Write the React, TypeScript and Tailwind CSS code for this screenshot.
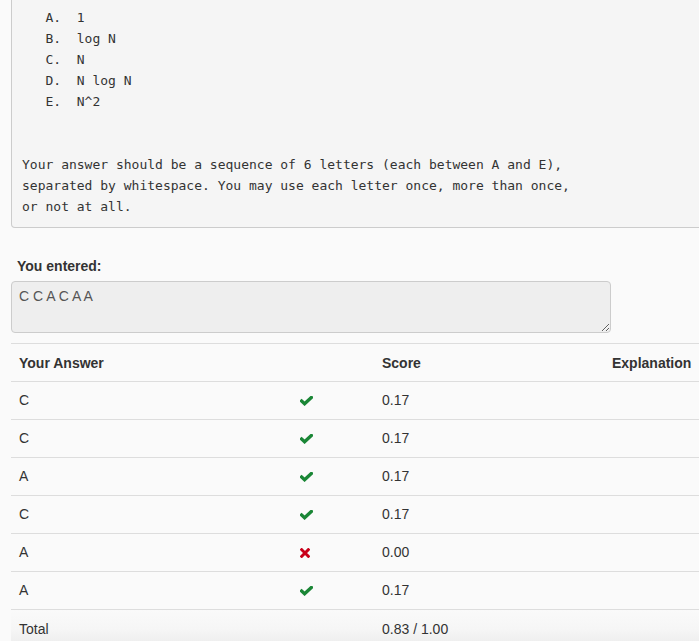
import React from "react";

const rows: { ans: string; ok: boolean; score: string }[] = [
  { ans: "C", ok: true, score: "0.17" },
  { ans: "C", ok: true, score: "0.17" },
  { ans: "A", ok: true, score: "0.17" },
  { ans: "C", ok: true, score: "0.17" },
  { ans: "A", ok: false, score: "0.00" },
  { ans: "A", ok: true, score: "0.17" },
];

function Check() {
  return (
    <svg width="13" height="10" viewBox="0 0 13 10" className="block">
      <path d="M1.6 5.0 L4.6 7.8 L11.4 1.4" fill="none" stroke="#1a8636" strokeWidth="3.3" strokeLinecap="square" />
    </svg>
  );
}

function Cross() {
  return (
    <svg width="10" height="10" viewBox="0 0 10 10" className="block">
      <path d="M1.7 1.7 L8.3 8.3 M8.3 1.7 L1.7 8.3" fill="none" stroke="#c9001a" strokeWidth="3" strokeLinecap="square" />
    </svg>
  );
}

const pre = `   A.  1
   B.  log N
   C.  N
   D.  N log N
   E.  N^2


Your answer should be a sequence of 6 letters (each between A and E),
separated by whitespace. You may use each letter once, more than once,
or not at all.`;

export default function App() {
  return (
    <div
      className="w-[699px] h-[641px] overflow-hidden bg-[#fafafa] text-[#333] text-[14px]"
      style={{ fontFamily: '"Liberation Sans", Arial, sans-serif' }}
    >
      <div className="ml-[11px] mr-[-20px]">
        <pre
          className="bg-[#f5f5f5] border border-t-0 border-[#cccccc] rounded-b-[4px] pt-[7px] pb-[10px] pl-[10px] text-[13px] leading-[21px] text-[#333] whitespace-pre"
          style={{ fontFamily: '"DejaVu Sans Mono", "Liberation Mono", monospace' }}
        >
          {pre}
        </pre>
      </div>

      <div className="mt-[28px] ml-[17px] font-bold leading-[20px]">You entered:</div>

      <div className="mt-[5px] ml-[11px] w-[600px]">
        <textarea
          readOnly
          value="C C A C A A"
          className="block w-[600px] h-[52px] bg-[#eeeeee] border border-[#cccccc] rounded-[4px] pt-[4px] pl-[7px] leading-[20px] text-[14px] text-[#555] outline-none"
          style={{ fontFamily: '"Liberation Sans", Arial, sans-serif', resize: "both" }}
        />
      </div>

      <div className="mt-[10px] ml-[11px] border-t border-[#dddddd]">
        <div className="grid grid-cols-[281px_82px_230px_1fr] h-[38px] items-center border-b border-[#dddddd] font-bold pt-[1px]">
          <div className="pl-[8px]">Your Answer</div>
          <div />
          <div className="pl-[8px]">Score</div>
          <div className="pl-[8px]">Explanation</div>
        </div>
        {rows.map((r, i) => (
          <div
            key={i}
            className="grid grid-cols-[281px_82px_230px_1fr] h-[38px] items-center border-b border-[#dddddd]"
          >
            <div className="pl-[8px]">{r.ans}</div>
            <div className="pl-[8px]">{r.ok ? <Check /> : <Cross />}</div>
            <div className="pl-[8px]">{r.score}</div>
            <div />
          </div>
        ))}
        <div className="grid grid-cols-[281px_82px_230px_1fr] h-[38px] items-center bg-gradient-to-b from-[#fafafa] via-[#f6f6f6] to-[#ebebeb]">
          <div className="pl-[8px]">Total</div>
          <div />
          <div className="pl-[8px]">0.83 / 1.00</div>
          <div />
        </div>
      </div>
    </div>
  );
}
